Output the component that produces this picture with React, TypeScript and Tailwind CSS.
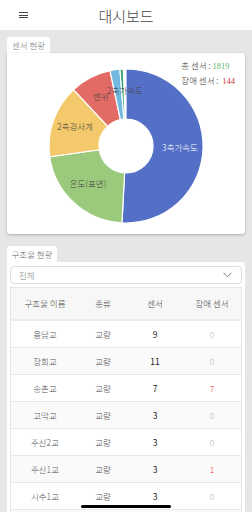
const kr = "font-['Noto_Sans_CJK_KR',sans-serif]";

const CX = 119;
const CY = 93;
const R = 77;
const R0 = 27;

const pt = (deg: number, r: number) => {
  const a = (deg * Math.PI) / 180;
  return `${(CX + r * Math.sin(a)).toFixed(2)} ${(CY - r * Math.cos(a)).toFixed(2)}`;
};

const arc = (a0: number, a1: number) => {
  const large = a1 - a0 > 180 ? 1 : 0;
  return `M ${pt(a0, R)} A ${R} ${R} 0 ${large} 1 ${pt(a1, R)} L ${pt(a1, R0)} A ${R0} ${R0} 0 ${large} 0 ${pt(a0, R0)} Z`;
};

const slices = [
  { from: 0, to: 183, color: "#5470c6" },
  { from: 183, to: 262, color: "#9cca7c" },
  { from: 262, to: 317, color: "#f4c96b" },
  { from: 317, to: 348, color: "#e36b66" },
  { from: 348, to: 355.5, color: "#73b8de" },
  { from: 355.5, to: 358, color: "#3ba272" },
];

const rows = [
  { name: "용담교", type: "교량", count: 9, fault: 0 },
  { name: "장회교", type: "교량", count: 11, fault: 0 },
  { name: "송촌교", type: "교량", count: 7, fault: 7 },
  { name: "고막교", type: "교량", count: 3, fault: 0 },
  { name: "주산2교", type: "교량", count: 3, fault: 0 },
  { name: "주산1교", type: "교량", count: 3, fault: 1 },
  { name: "시수1교", type: "교량", count: 3, fault: 0 },
];

const DonutChart = () => (
  <svg width="238" height="181" viewBox="0 0 238 181" className="block">
    {slices.map((s) => (
      <path key={s.from} d={arc(s.from, s.to)} fill={s.color} stroke="#fff" strokeWidth="1.2" />
    ))}
    <g fontFamily="Noto Sans CJK KR, sans-serif" fontSize="8.5" fontWeight="300" textAnchor="middle" dominantBaseline="middle">
      <text x="173" y="96" fill="#fff">3축가속도</text>
      <text x="81" y="132" fill="#444">온도(표면)</text>
      <text x="68" y="75" fill="#444">2축경사계</text>
      <text x="94" y="45" fill="#444">변위</text>
      <text x="118" y="39" fill="#444">2축가속도</text>
    </g>
  </svg>
);

export default function App() {
  return (
    <div className={`relative h-[512px] w-[252px] overflow-hidden bg-[#e6e6e6] font-light ${kr}`}>
      <header className="relative flex h-[30px] items-center justify-center bg-white">
        <div className="absolute left-[19px] top-[12px] flex w-[9px] flex-col gap-[1.5px]">
          <span className="h-[1px] bg-[#444]" />
          <span className="h-[1px] bg-[#444]" />
          <span className="h-[1px] bg-[#444]" />
        </div>
        <h1 className="text-[15px] leading-none text-[#444]">대시보드</h1>
      </header>

      <section className="px-[7px] pt-[7px]">
        <div className="flex h-[16px] w-[43px] items-center justify-center rounded-t-[3px] bg-white text-[8.5px] text-[#777]">
          센서 현황
        </div>
        <div className="relative rounded-b-[3px] rounded-tr-[3px] bg-white shadow-[0_1px_3px_rgba(0,0,0,0.25)]">
          <DonutChart />
          <div className="absolute right-[10px] top-[7px] flex flex-col gap-[3px] text-[8.5px] leading-[11px] text-[#333]">
            <div>
              총 센서 : <span className="font-['Liberation_Serif',serif] font-normal text-[#5fb86a]">1819</span>
            </div>
            <div>
              장애 센서 :&nbsp; <span className="font-['Liberation_Serif',serif] font-normal text-[#d23b3b]">144</span>
            </div>
          </div>
        </div>
      </section>

      <section className="px-[7px] pt-[12px]">
        <div className="flex h-[16px] w-[50px] items-center justify-center rounded-t-[3px] bg-white text-[8.5px] text-[#666]">
          구조물 현황
        </div>
        <div className="rounded-tr-[3px] bg-white px-[3px] pt-[4px] pb-[4px]">
          <div className="flex h-[18px] items-center justify-between rounded-[4px] border border-[#dedede] pl-[8px] pr-[9px] text-[8.5px] text-[#888]">
            <span>전체</span>
            <svg width="9" height="6" viewBox="0 0 9 6">
              <path d="M0.5 0.8 L4.5 4.8 L8.5 0.8" fill="none" stroke="#666" strokeWidth="0.9" />
            </svg>
          </div>
          <div className="mt-[3px] border border-[#e6e6e6] text-[8.5px]">
            <div className="grid h-[33px] grid-cols-[68px_48px_56px_1fr] items-center border-b-2 border-[#ececec] bg-[#f7f7f7] text-center text-[#444]">
              <span>구조물 이름</span>
              <span>종류</span>
              <span>센서</span>
              <span>장애 센서</span>
            </div>
            {rows.map((r, i) => (
              <div
                key={r.name}
                className={`grid h-[27px] grid-cols-[68px_48px_56px_1fr] items-center border-b border-[#e8e8e8] text-center ${
                  i % 2 === 1 ? "bg-[#fafafa]" : "bg-white"
                }`}
              >
                <span className="text-[#555]">{r.name}</span>
                <span className="text-[#555]">{r.type}</span>
                <span className="font-normal text-[#222]">{r.count}</span>
                <span className={r.fault > 0 ? "text-[#e53935]" : "text-[#bbb]"}>{r.fault}</span>
              </div>
            ))}
            <div className="h-[27px] bg-[#fafafa]" />
          </div>
        </div>
      </section>

      <div className="absolute bottom-[4px] left-[81px] h-[3px] w-[90px] rounded-full bg-black" />
    </div>
  );
}
